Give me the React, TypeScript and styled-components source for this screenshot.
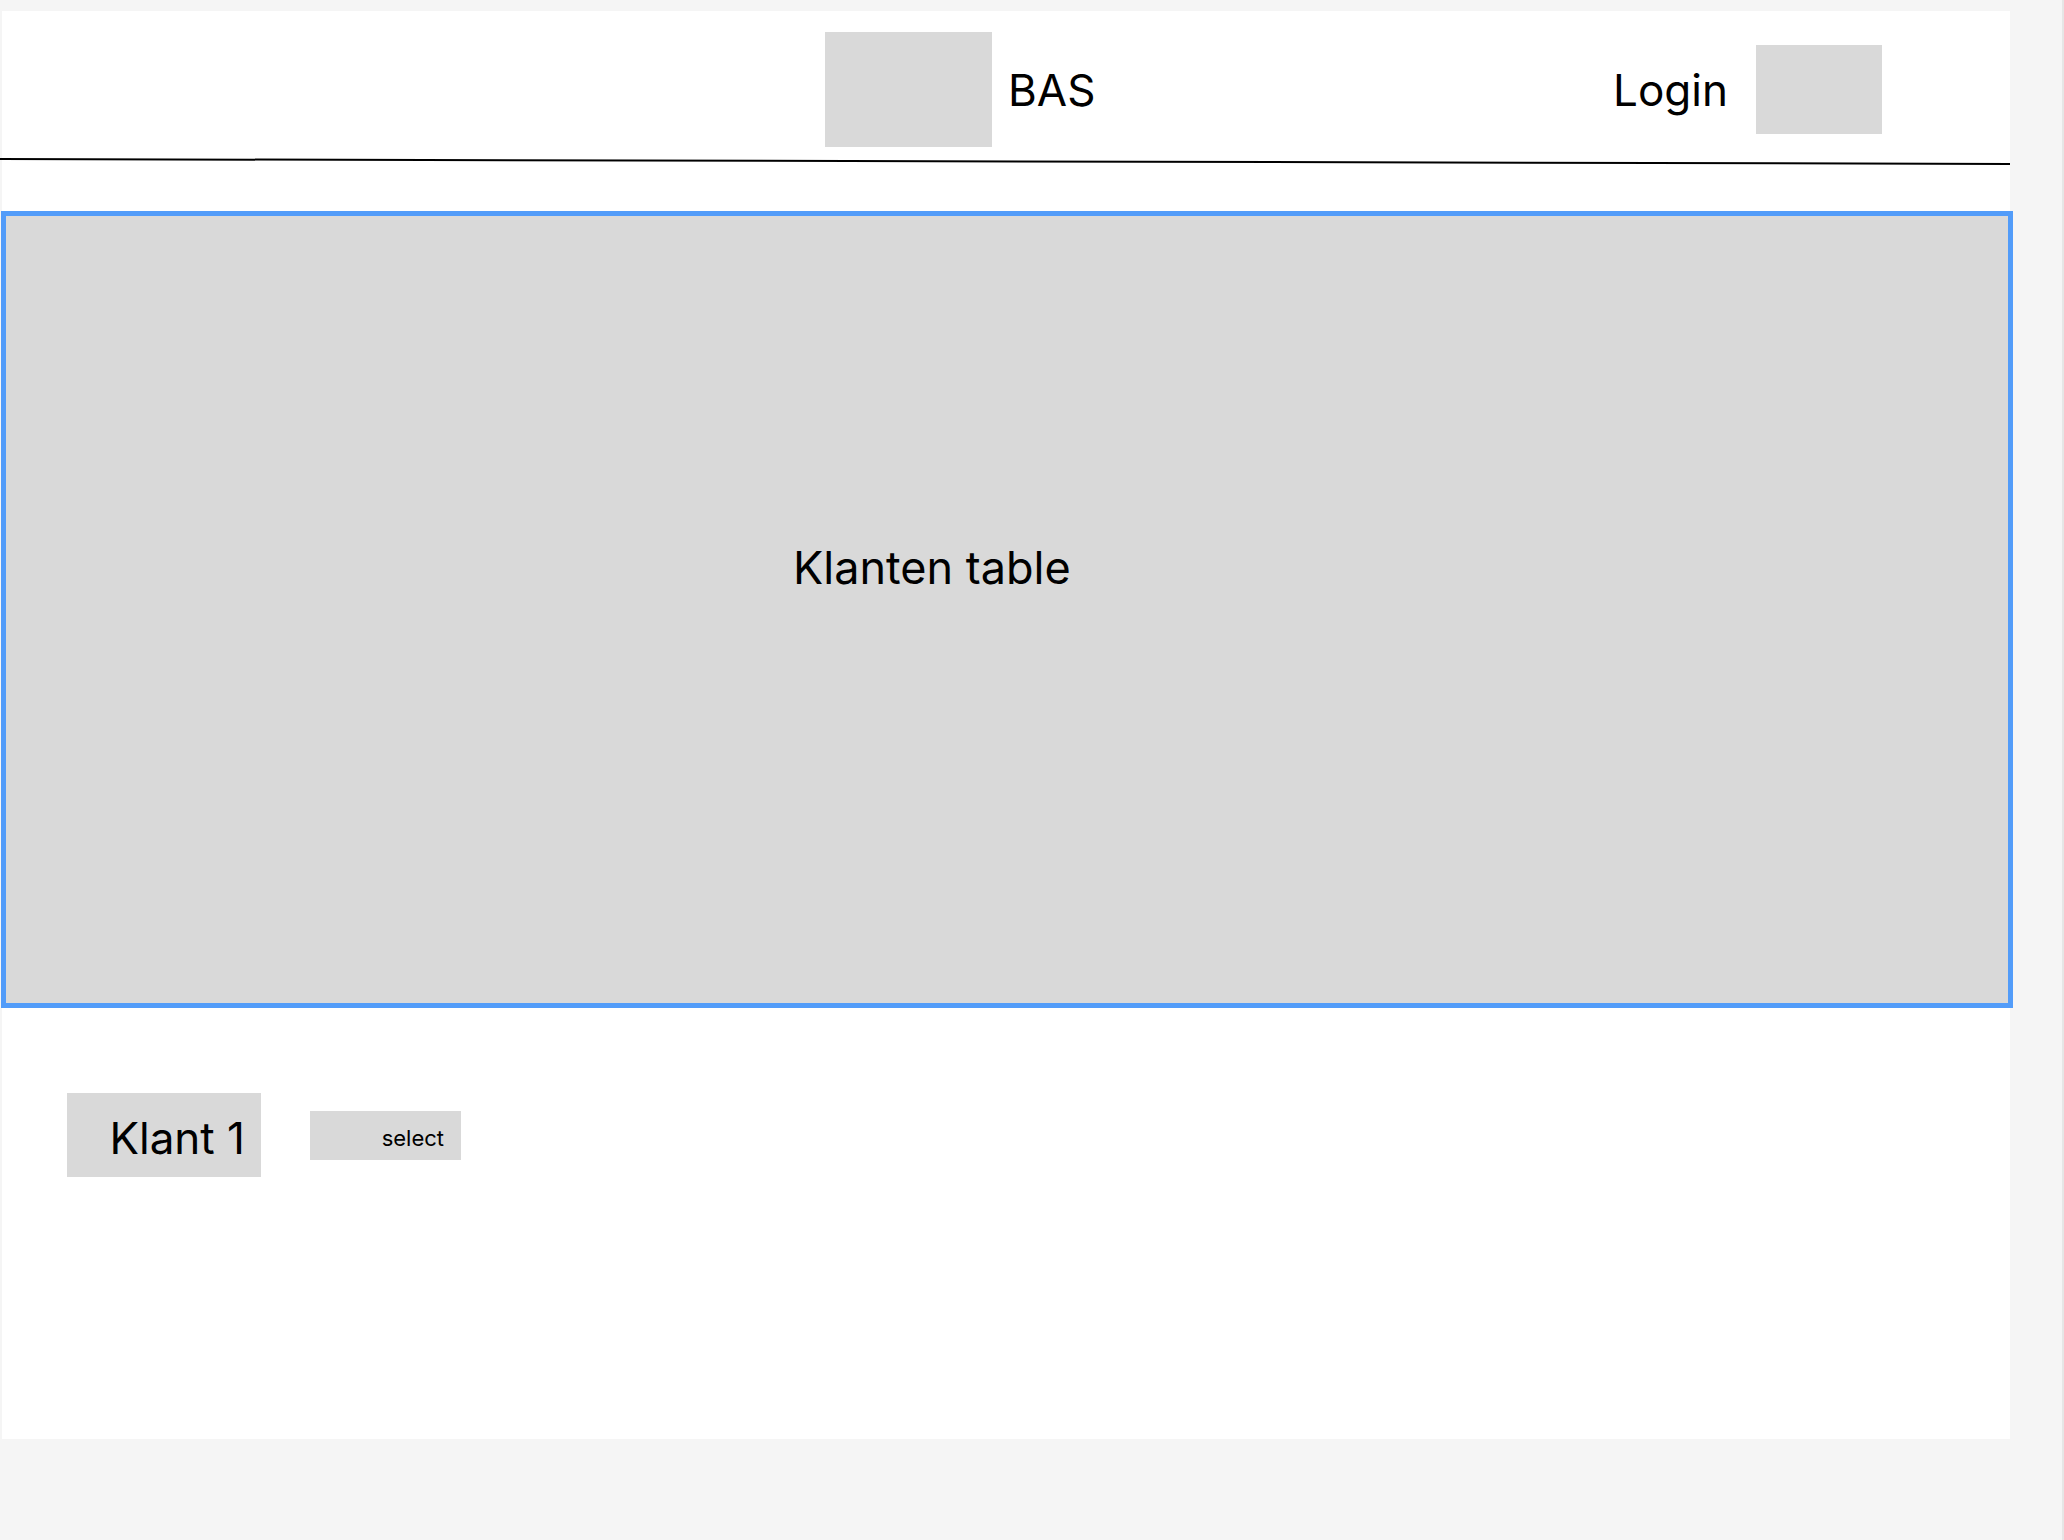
import React from 'react';
import styled, { createGlobalStyle } from 'styled-components';

const GlobalStyle = createGlobalStyle`
  html, body {
    margin: 0;
    padding: 0;
    background: #f5f5f5;
    font-family: Inter, "Noto Sans", sans-serif;
    color: #000;
  }
  * { box-sizing: border-box; }
`

const Shell = styled.div`
  width: 2064px;
  min-height: 1540px;
  padding-top: 11px;
  padding-left: 2px;
  border-right: 2px solid #e6e6e6;
`

const Frame = styled.div`
  width: 2008px;
  height: 1428px;
  background: #fff;
`

const Header = styled.header`
  display: flex;
  align-items: center;
  padding: 21px 128px 11px 823px;
`

const Placeholder = styled.div<{ w: number, h: number }>`
  width: ${props => props.w}px;
  height: ${props => props.h}px;
  background: #d9d9d9;
  flex-shrink: 0;
`

const Brand = styled.span`
  font-size: 44px;
  margin-left: 16px;
`

const Spacer = styled.div`
  flex: 1;
`

const LoginLabel = styled.span`
  font-size: 44px;
  margin-right: 28px;
`

const Divider = styled.div`
  width: 2010px;
  height: 1.5px;
  margin-left: -2px;
  background: #000;
  transform: rotate(0.14deg);
  transform-origin: 0 0;
`

const TablePanel = styled.section`
  width: calc(100% + 4px);
  height: 797px;
  margin: 51px 0 0 -1px;
  border: 5px solid #529cf9;
  background: #d9d9d9;
  padding: 324px 0 0 787px;
  font-size: 45px;
`

const ClientRow = styled.div`
  display: flex;
  align-items: flex-start;
  gap: 49px;
  padding: 85px 0 0 65px;
`

const ClientName = styled.div`
  width: 194px;
  height: 84px;
  background: #d9d9d9;
  display: flex;
  align-items: center;
  justify-content: flex-end;
  padding: 6px 16px 0 0;
  font-size: 44px;
`

const SelectButton = styled.button`
  width: 151px;
  height: 49px;
  margin-top: 18px;
  border: none;
  background: #d9d9d9;
  display: flex;
  align-items: center;
  justify-content: flex-end;
  padding: 6px 17px 0 0;
  font-family: Inter, "Noto Sans", sans-serif;
  font-size: 22px;
  color: #000;
`

export default function App() {
  return (
    <>
      <GlobalStyle />
      <Shell>
        <Frame>
          <Header>
            <Placeholder w={167} h={115} />
            <Brand>BAS</Brand>
            <Spacer />
            <LoginLabel>Login</LoginLabel>
            <Placeholder w={126} h={89} />
          </Header>
          <Divider />
          <TablePanel>Klanten table</TablePanel>
          <ClientRow>
            <ClientName>Klant 1</ClientName>
            <SelectButton>select</SelectButton>
          </ClientRow>
        </Frame>
      </Shell>
    </>
  )
}
